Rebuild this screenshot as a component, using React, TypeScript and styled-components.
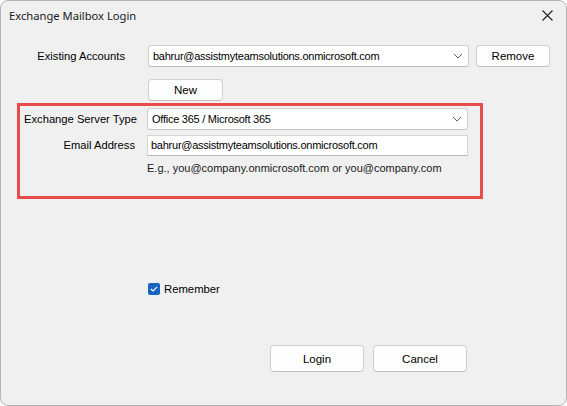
import styled, { createGlobalStyle } from 'styled-components';

const GlobalStyle = createGlobalStyle`
  html, body {
    margin: 0;
    padding: 0;
    background: #ffffff;
  }
  * {
    box-sizing: border-box;
  }
`;

const uiFont = `'Liberation Sans', Arial, sans-serif`;

function Chevron() {
  return (
    <svg width="10" height="6" viewBox="0 0 10 6">
      <path d="M1 1 L5 5 L9 1" fill="none" stroke="#606060" strokeWidth="1" />
    </svg>
  );
}

function App() {
  return (
    <>
      <GlobalStyle />
      <Window>
        <TitleBar>
          <Title>Exchange Mailbox Login</Title>
          <CloseButton aria-label="Close">
            <svg width="11" height="11" viewBox="0 0 11 11">
              <path d="M0.5 0.5 L10.5 10.5 M10.5 0.5 L0.5 10.5" stroke="#202020" strokeWidth="1.1" />
            </svg>
          </CloseButton>
        </TitleBar>
        <Body>
          <FieldRow>
            <Label width={108} gap={23}>Existing Accounts</Label>
            <Combo>
              <FieldText>bahrur@assistmyteamsolutions.onmicrosoft.com</FieldText>
              <Chevron />
            </Combo>
            <Button width={74} height={22} style={{ marginLeft: 7 }}>
              Remove
            </Button>
          </FieldRow>
          <ActionRow>
            <Button width={75} height={22}>New</Button>
          </ActionRow>
          <Highlight>
            <FieldRow>
              <Label width={117} gap={10}>Exchange Server Type</Label>
              <Combo>
                <FieldText>Office 365 / Microsoft 365</FieldText>
                <Chevron />
              </Combo>
            </FieldRow>
            <FieldRow>
              <Label width={115} gap={12}>Email Address</Label>
              <TextInput>
                <FieldText>bahrur@assistmyteamsolutions.onmicrosoft.com</FieldText>
              </TextInput>
            </FieldRow>
            <Hint>E.g., you@company.onmicrosoft.com or you@company.com</Hint>
          </Highlight>
          <CheckRow>
            <CheckBox>
              <svg width="8" height="6" viewBox="0 0 8 6">
                <path d="M0.8 3 L3 5 L7.2 0.8" fill="none" stroke="#ffffff" strokeWidth="1.2" />
              </svg>
            </CheckBox>
            <CheckLabel>Remember</CheckLabel>
          </CheckRow>
          <Footer>
            <Button width={94} height={27}>Login</Button>
            <Button width={94} height={27}>Cancel</Button>
          </Footer>
        </Body>
      </Window>
    </>
  );
}

export default App;

const Window = styled.div`
  width: 567px;
  height: 406px;
  background: #f0f0f0;
  border: 1px solid #b4b4b4;
  border-radius: 8px;
  display: flex;
  flex-direction: column;
  overflow: hidden;
  font-family: ${uiFont};
  font-size: 11.3px;
  color: #000000;
`;

const TitleBar = styled.div`
  height: 31px;
  display: flex;
  align-items: center;
  justify-content: space-between;
  padding: 0 12px 2px 8px;
`;

const Title = styled.div`
  font-family: 'Noto Sans', 'Open Sans', sans-serif;
  font-size: 11.2px;
  color: #1a1a1a;
`;

const CloseButton = styled.div`
  display: flex;
  align-items: center;
  justify-content: center;
  width: 14px;
  height: 14px;
`;

const Body = styled.div`
  display: flex;
  flex-direction: column;
  padding: 13px 0 0 16px;
  flex: 1;
`;

const FieldRow = styled.div`
  display: flex;
  align-items: center;
  height: 22px;
`;

const Label = styled.div<{ width: number; gap: number }>`
  width: ${(p) => p.width}px;
  margin-right: ${(p) => p.gap}px;
  text-align: right;
  white-space: nowrap;
  font-size: 11.2px;
  color: #000000;
`;

const FieldText = styled.span`
  font-size: 11px;
  letter-spacing: -0.25px;
  white-space: nowrap;
`;

const Combo = styled.div`
  width: 321px;
  height: 22px;
  background: #ffffff;
  border: 1px solid #cfcfcf;
  border-bottom-color: #bdbdbd;
  border-radius: 3px;
  display: flex;
  align-items: center;
  justify-content: space-between;
  padding: 0 5px 0 4px;
`;

const TextInput = styled.div`
  width: 321px;
  height: 21px;
  background: #ffffff;
  border: 1px solid #d6d6d6;
  border-bottom-color: #b8b8b8;
  display: flex;
  align-items: center;
  padding: 0 3px;
`;

const Button = styled.div<{ width: number; height: number }>`
  width: ${(p) => p.width}px;
  height: ${(p) => p.height}px;
  background: #fdfdfd;
  border: 1px solid #d0d0d0;
  border-bottom-color: #c0c0c0;
  border-radius: 4px;
  display: flex;
  align-items: center;
  justify-content: center;
  font-size: 11.5px;
  color: #000000;
`;

const ActionRow = styled.div`
  display: flex;
  padding-left: 131px;
  margin-top: 12px;
`;

const Highlight = styled.div`
  width: 466px;
  height: 96px;
  margin-top: 2px;
  border: 3px solid #e84c4c;
  display: flex;
  flex-direction: column;
  gap: 4px;
  padding: 2px 0 0 0;
`;

const Hint = styled.div`
  padding-left: 127px;
  margin-top: 2px;
  font-size: 11px;
  color: #1a1a1a;
`;

const CheckRow = styled.div`
  display: flex;
  align-items: center;
  gap: 4px;
  margin-top: 84px;
  padding-left: 131px;
`;

const CheckBox = styled.div`
  width: 12px;
  height: 12px;
  background: #1565c0;
  border-radius: 2px;
  display: flex;
  align-items: center;
  justify-content: center;
`;

const CheckLabel = styled.div`
  font-size: 11.3px;
`;

const Footer = styled.div`
  display: flex;
  gap: 9px;
  margin-top: 50px;
  padding-left: 253px;
`;
